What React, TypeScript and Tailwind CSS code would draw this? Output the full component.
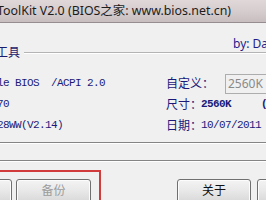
import React from "react";

const cjk = { fontFamily: '"Noto Sans", "Noto Sans CJK SC", sans-serif' };
const mono = { fontFamily: '"Liberation Mono", "Noto Sans CJK SC", monospace' };

function Btn({ label, disabled, className }: { label: string; disabled?: boolean; className: string }) {
  return (
    <div
      className={
        "h-[24px] shrink-0 rounded-[3px] border border-[#707070] bg-gradient-to-b from-[#f3f3f3] via-[#e8e8e8] to-[#d8d8d8] shadow-[inset_0_0_0_1px_#fcfcfc] flex items-center justify-center text-[12px] " +
        (disabled ? "text-[#9c9c9c] " : "text-[#111] ") +
        className
      }
      style={cjk}
    >
      {label}
    </div>
  );
}

export default function App() {
  return (
    <div className="relative w-[266px] h-[200px] overflow-hidden bg-[#f0f0f0]">
      {/* title bar */}
      <div className="h-[23px] border-b border-[#958d8f] bg-gradient-to-b from-[#dfd7d8] via-[#d6cdcf] to-[#c8bec0] flex items-center">
        <span className="-ml-[3px] whitespace-nowrap text-[12.4px] text-[#1c1c1c]" style={cjk}>
          ToolKit V2.0 (BIOS之家: www.bios.net.cn)
        </span>
      </div>

      {/* by line */}
      <div className="mt-[14px] h-[14px] flex items-center">
        <span className="ml-[233px] whitespace-nowrap text-[12px] text-[#1e1e8a]" style={cjk}>
          by: Dave
        </span>
      </div>

      {/* group header */}
      <div className="-mt-[5px] h-[14px] flex items-center">
        <span className="-ml-[4px] whitespace-nowrap text-[12px] text-[#1a1a6e]" style={cjk}>
          工具
        </span>
        <div className="ml-[4px] flex-1 border-t border-b border-t-[#b4b4b4] border-b-white" />
      </div>

      {/* rows */}
      <div className="mt-[13px] grid grid-cols-[166px_1fr] grid-rows-[21px_21px_21px] text-[#1a1a7a]">
        <div className="flex items-center">
          <span className="-ml-[3px] whitespace-pre text-[11px] tracking-[-0.6px]" style={mono}>
            le BIOS  /ACPI 2.0
          </span>
        </div>
        <div className="flex items-center">
          <span className="whitespace-nowrap text-[12px] w-[59px]" style={cjk}>
            自定义：
          </span>
          <div className="h-[20px] w-[60px] shrink-0 border border-[#adadad] bg-[#f0f0f0] flex items-center pl-[2px] text-[12px] text-[#8a8a8a]" style={cjk}>
            2560K
          </div>
        </div>

        <div className="flex items-center">
          <span className="-ml-[3px] whitespace-pre text-[11px] tracking-[-0.6px]" style={mono}>
            70
          </span>
        </div>
        <div className="flex items-center">
          <span className="whitespace-nowrap text-[12px] w-[35px]" style={cjk}>
            尺寸：
          </span>
          <span className="whitespace-pre text-[11px] tracking-[-0.6px] font-bold" style={mono}>
            2560K     (
          </span>
        </div>

        <div className="flex items-center">
          <span className="-ml-[3px] whitespace-pre text-[11px] tracking-[-0.6px]" style={mono}>
            28WW(V2.14)
          </span>
        </div>
        <div className="flex items-center">
          <span className="whitespace-nowrap text-[12px] w-[35px]" style={cjk}>
            日期：
          </span>
          <span className="whitespace-pre text-[11px] tracking-[-0.6px]" style={mono}>
            10/07/2011
          </span>
        </div>
      </div>

      {/* separators */}
      <div className="mt-[6px] border-t border-b border-t-[#858585] border-b-white" />
      <div className="mt-[16px] border-t border-b border-t-[#858585] border-b-white" />

      {/* buttons */}
      <div className="mt-[17px] flex">
        <Btn label="" className="-ml-[63px] w-[75px]" />
        <Btn label="备份" disabled className="ml-[4px] w-[75px]" />
        <Btn label="关于" className="ml-[86px] w-[74px]" />
        <Btn label="" className="ml-[6px] w-[75px]" />
      </div>

      {/* red annotation box */}
      <div className="absolute left-[-3px] top-[170px] w-[104px] h-[40px] border-2 border-[#d23b3b]" />
    </div>
  );
}
